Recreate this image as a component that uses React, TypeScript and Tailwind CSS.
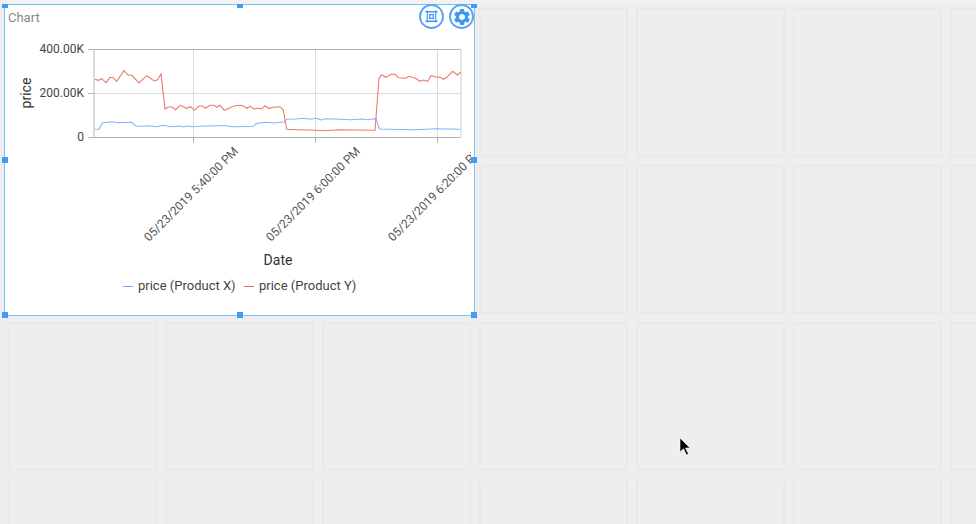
import { MdSettings } from 'react-icons/md';

// points read off the reference, as x,y in page pixels
const zoomA = (pts: number[][]) => pts.map(([x, y]) => [x / 3, y / 3]);
const zoomB = (pts: number[][]) => pts.map(([x, y]) => [x / 3 + 240, y / 3]);

const redLine = [
  ...zoomA([
    [285, 238], [295, 241], [305, 236], [318, 248], [330, 232], [340, 233], [350, 244], [372, 212], [385, 226], [395, 226],
    [417, 249], [440, 227], [462, 242], [472, 240], [483, 222], [495, 327], [505, 321], [517, 321], [527, 329], [540, 316],
    [560, 325], [572, 320], [583, 331], [597, 318], [607, 318], [617, 325], [630, 316], [643, 316], [650, 322], [660, 316],
    [673, 331], [690, 323], [705, 317],
  ]),
  ...zoomB([
    [0, 316], [10, 318], [20, 325], [30, 319], [42, 327], [55, 325], [65, 327], [75, 317], [85, 325], [100, 322], [120, 320],
    [130, 330], [140, 388], [170, 389], [210, 390], [250, 392], [300, 389], [350, 390], [405, 391], [417, 235], [425, 224],
    [437, 232], [455, 222], [465, 223], [475, 233], [497, 235], [507, 229], [525, 234], [540, 244], [550, 240], [563, 244],
    [573, 227], [590, 232], [600, 231], [610, 238], [620, 232], [638, 214], [652, 225], [662, 217],
  ]),
];

const blueLine = [
  ...zoomA([
    [285, 388], [297, 388], [307, 369], [320, 367], [340, 365], [350, 368], [395, 367], [408, 378], [420, 379], [445, 377],
    [470, 380], [490, 376], [510, 380], [540, 378], [550, 381], [560, 378], [575, 380], [600, 379], [650, 377], [680, 377],
    [695, 380],
  ]),
  ...zoomB([
    [0, 380], [40, 379], [50, 370], [80, 367], [100, 369], [133, 366], [140, 358], [170, 357], [190, 355], [210, 358], [230, 355],
    [243, 360], [255, 356], [300, 358], [330, 359], [370, 357], [380, 359], [408, 356], [418, 387], [450, 388], [520, 389],
    [590, 386], [662, 388],
  ]),
];

const toPoints = (pts: number[][]) => pts.map(([x, y]) => `${x.toFixed(1)},${y.toFixed(1)}`).join(' ');

const cells = Array.from({ length: 28 }, (_, i) => i);

const xTicks = [
  { x: 193, label: '05/23/2019 5:40:00 PM' },
  { x: 315, label: '05/23/2019 6:00:00 PM' },
  { x: 437, label: '05/23/2019 6:20:00 PM' },
];

const handles = [
  'left-[2px] top-[4px] h-[4px]',
  'left-[237px] top-[4px] h-[4px]',
  'left-[471px] top-[4px] h-[4px]',
  'left-[2px] top-[157px] h-[6px]',
  'left-[471px] top-[157px] h-[6px]',
  'left-[2px] top-[312px] h-[6px]',
  'left-[237px] top-[312px] h-[6px]',
  'left-[471px] top-[312px] h-[6px]',
];

function Chart() {
  return (
    <svg width="466" height="310" viewBox="5 5 466 310" className="block font-['Roboto',sans-serif]">
      <g stroke="#dcdcdc" strokeWidth="1">
        <line x1="93" y1="93.5" x2="461" y2="93.5" />
        <line x1="193.5" y1="49" x2="193.5" y2="137" />
        <line x1="315.5" y1="49" x2="315.5" y2="137" />
        <line x1="437.5" y1="49" x2="437.5" y2="137" />
      </g>
      <g stroke="#b5b5b5" strokeWidth="1">
        <line x1="88" y1="49.5" x2="461" y2="49.5" />
        <line x1="88" y1="93.5" x2="93" y2="93.5" />
        <line x1="88" y1="137.5" x2="461" y2="137.5" />
        <line x1="94" y1="49" x2="94" y2="138" />
        <line x1="193.5" y1="137" x2="193.5" y2="143" />
        <line x1="315.5" y1="137" x2="315.5" y2="143" />
        <line x1="437.5" y1="137" x2="437.5" y2="143" />
      </g>
      <line x1="461" y1="49" x2="461" y2="138" stroke="#dedede" strokeWidth="1.5" />

      <polyline points={toPoints(blueLine)} fill="none" stroke="#88b2f7" strokeWidth="1.1" />
      <polyline points={toPoints(redLine)} fill="none" stroke="#ea7a71" strokeWidth="1.1" />

      <g fontSize="12" fill="#444444" textAnchor="end">
        <text x="84" y="53">400.00K</text>
        <text x="84" y="97">200.00K</text>
        <text x="84" y="141">0</text>
      </g>
      <text x="31" y="93" fontSize="14" fill="#333333" textAnchor="middle" transform="rotate(-90 31 93)">
        price
      </text>

      {xTicks.map((t) => (
        <text
          key={t.x}
          x={t.x + 46}
          y={152}
          fontSize="12"
          fill="#555555"
          textAnchor="end"
          transform={`rotate(-45 ${t.x + 46} 152)`}
        >
          {t.label}
        </text>
      ))}

      <text x="278" y="265" fontSize="14" fill="#333333" textAnchor="middle">
        Date
      </text>

      <line x1="123" y1="286.5" x2="133" y2="286.5" stroke="#6ea3f5" strokeWidth="1" />
      <text x="138" y="290" fontSize="13" fill="#444444">
        price (Product X)
      </text>
      <line x1="244" y1="286.5" x2="254" y2="286.5" stroke="#e8655a" strokeWidth="1" />
      <text x="259" y="290" fontSize="13" fill="#444444">
        price (Product Y)
      </text>
    </svg>
  );
}

function FrameIcon() {
  return (
    <svg width="15" height="15" viewBox="0 0 16 16" fill="none" stroke="#3f97f5">
      <path d="M1.5 3h13M1.5 13h13" strokeWidth="1.6" />
      <path d="M3.5 1.5v13M12.5 1.5v13" strokeWidth="1.2" />
      <rect x="6" y="6" width="4" height="4" strokeWidth="1.4" />
    </svg>
  );
}

export default function App() {
  return (
    <div className="relative h-[524px] w-[976px] overflow-hidden bg-[#eeeeee]">
      <div className="h-[3px] bg-[#f3f1f1]" />
      <div className="grid grid-cols-[repeat(7,149px)] gap-2 pl-2 pt-[5px]">
        {cells.map((c) => (
          <div key={c} className="h-[149px] w-[149px] border-2 border-[#e9e9e9] bg-[#eeeeee]" />
        ))}
      </div>

      {/* selected widget */}
      <div className="absolute left-[4px] top-[4px] h-[312px] w-[471px] border border-[#7cc4ee] bg-white">
        <div className="absolute left-[3px] top-[5px] font-['Roboto',sans-serif] text-[13px] leading-[16px] text-[#888888]">
          Chart
        </div>
        <div className="absolute inset-0">
          <Chart />
        </div>
        <div className="absolute right-0 top-[-1px] flex gap-[5px]">
          <button className="flex h-[25px] w-[25px] items-center justify-center rounded-full border-2 border-[#58a6f5] bg-white">
            <FrameIcon />
          </button>
          <button className="flex h-[25px] w-[25px] items-center justify-center rounded-full border-2 border-[#58a6f5] bg-white text-[#3f97f5]">
            <MdSettings size={20} />
          </button>
        </div>
      </div>

      {handles.map((h) => (
        <div key={h} className={`absolute w-[6px] bg-[#3f9bff] ${h}`} />
      ))}

      {/* mouse pointer */}
      <svg className="absolute left-[679px] top-[437px]" width="12" height="20" viewBox="0 0 12 20">
        <path d="M1 1v14l3.5-3.2L7.5 18l2-1-3-6h4.5z" fill="#000000" stroke="#ffffff" strokeWidth="0.6" />
      </svg>
    </div>
  );
}
